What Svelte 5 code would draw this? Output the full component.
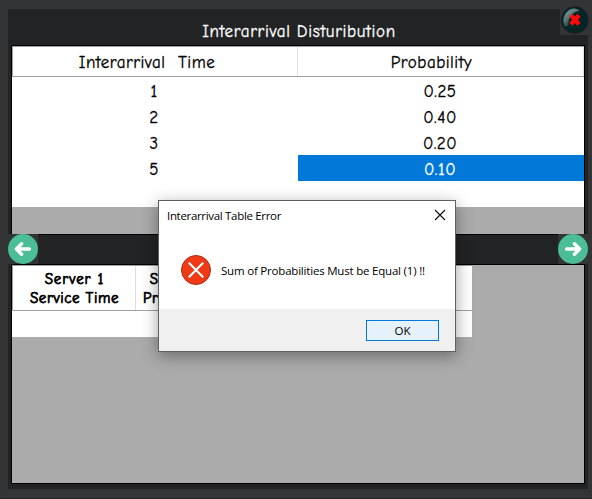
<script>
  const rows = [
    { time: '1', probability: '0.25' },
    { time: '2', probability: '0.40' },
    { time: '3', probability: '0.20' },
    { time: '5', probability: '0.10', selected: true },
    { time: '', probability: '' }
  ];
</script>

{#snippet arrow(right)}
  <svg class="arrow" viewBox="0 0 30 30" aria-hidden="true">
    <circle cx="15" cy="15" r="15" fill="#4bbd97" />
    <g transform={right ? 'translate(30 0) scale(-1 1)' : undefined}>
      <path d="M21.5 15H9M13.6 9.8 8.4 15l5.2 5.2" fill="none" stroke="#fff" stroke-width="3.4" stroke-linecap="round" stroke-linejoin="round" />
    </g>
  </svg>
{/snippet}

<div class="window">
  <main class="panel">
    <h1><span>Interarrival Disturibution</span></h1>
    <section class="grid first">
      <div class="row head">
        <div class="cell"><span>Interarrival&nbsp; Time</span></div>
        <div class="cell"><span>Probability</span></div>
      </div>
      {#each rows as row}
        <div class="row">
          <div class="cell"><span>{row.time}</span></div>
          <div class="cell" class:selected={row.selected}><span>{row.probability}</span></div>
        </div>
      {/each}
    </section>
    <nav>
      <button aria-label="Previous">{@render arrow(false)}</button>
      <button aria-label="Next">{@render arrow(true)}</button>
    </nav>
    <section class="grid second">
      <div class="servers">
        <div class="server-head">
          <div class="col"><span class="s1">Server 1</span><span>Service Time</span></div>
          <div class="col"><span class="s1">Server 1</span><span>Probability</span></div>
        </div>
      </div>
    </section>
  </main>

  <button class="close" aria-label="Close window">
    <svg viewBox="0 0 28 26" aria-hidden="true">
      <defs>
        <linearGradient id="shine" x1="0.1" y1="0" x2="0.8" y2="0.85">
          <stop offset="0" stop-color="#8fa3a3" />
          <stop offset="0.45" stop-color="#5b7776" />
          <stop offset="1" stop-color="#032526" />
        </linearGradient>
      </defs>
      <circle cx="14.8" cy="11.2" r="14" fill="#1d2527" />
      <circle cx="14.8" cy="11" r="12.9" fill="#032526" />
      <path d="M5 17.5C.8 10.5 5.2.6 13.6-.6c2.6 0 4.8.9 6.4 2.6C12.6 2 7.6 8.5 8.6 16.5Z" fill="url(#shine)" />
      <path d="m10.9 6.2 8.2 9m0-9-8.2 9" stroke="#ff0808" stroke-width="4.3" />
    </svg>
  </button>

  <div class="dialog" role="dialog" aria-label="Interarrival Table Error">
    <header>
      <span class="title">Interarrival Table Error</span>
      <svg width="12" height="12" viewBox="0 0 12 12" aria-hidden="true"><path d="m1 1 10 10M11 1 1 11" stroke="#111" stroke-width="1.15" /></svg>
    </header>
    <div class="body">
      <svg width="30" height="30" viewBox="0 0 30 30" aria-hidden="true">
        <circle cx="15" cy="15" r="14.5" fill="#f03a17" stroke="#a92c16" />
        <path d="m7.8 7.8 14.4 14.4m0-14.4L7.8 22.2" stroke="#fff" stroke-width="2.1" />
      </svg>
      <span class="message">Sum of Probabilities Must be Equal (1) !!</span>
    </div>
    <footer><button>OK</button></footer>
  </div>
</div>

<style>
  :global(body) { background: #333436; }
  .window, .window * { box-sizing: border-box; }
  .window {
    position: relative;
    width: 592px;
    height: 499px;
    padding: 9px 4px 0 8px;
    background: #333436;
    border-bottom: 1px solid #242426;
    overflow: hidden;
    font-family: "Comic Sans MS", "Comic Neue", "Open Sans", sans-serif;
    font-size: 17px;
    letter-spacing: 0.5px;
    color: #000;
  }
  button { margin: 0; padding: 0; border: 0; font: inherit; }
  span { white-space: nowrap; }
  svg { display: block; flex: none; }
  .panel { width: 580px; height: 480px; background: #222325; display: flex; flex-direction: column; -webkit-text-stroke: 0.3px currentColor; }
  h1 {
    margin: 0;
    height: 36px;
    padding: 8px 0 0 2px;
    font-size: 17px;
    font-weight: 400;
    letter-spacing: 0.63px;
    line-height: 29px;
    text-align: center;
    color: #fff;
  }
  .grid { width: 574px; margin-left: 3px; border: 1px solid #000; background: #ababab; }
  .first { height: 190px; }
  .row { display: grid; grid-template-columns: 286px 286px; grid-template-rows: 100%; height: 26px; background: #fff; line-height: 29px; text-align: center; }
  .cell { height: 100%; padding-right: 2px; }
  .head { height: 31px; border-top: 1px solid #a0a0a0; border-bottom: 1px solid #a0a0a0; line-height: 31px; box-shadow: inset 1px 0 #a0a0a0; }
  .head .cell { padding-right: 18px; border-right: 1px solid #e2e2e2; }
  .head .cell:first-child { padding-right: 15px; }
  .selected { background: #0078d7; color: #fff; }
  nav { display: flex; justify-content: space-between; height: 30px; margin-top: -1px; position: relative; }
  nav button { width: 30px; height: 30px; background: #333436; }
  .arrow { width: 30px; height: 30px; }
  .second { height: 220px; }
  .servers { width: 460px; height: 72px; background: #fff; }
  .server-head { display: flex; height: 46px; border-top: 1px solid #a0a0a0; border-bottom: 1px solid #a0a0a0; box-shadow: inset 1px 0 #a0a0a0; }
  .col { width: 124px; border-right: 1px solid #dedede; display: flex; flex-direction: column; align-items: center; padding: 4px 0 0 2px; font-size: 15px; letter-spacing: 0.55px; line-height: 19px; -webkit-text-stroke: 0.75px currentColor; }
  .col + .col { width: 86px; }
  .s1 { letter-spacing: 0.95px; }
  .close { position: absolute; left: 560px; top: 9px; width: 28px; height: 26px; background: #333436; }
  .close svg { width: 28px; height: 26px; overflow: visible; }
  .dialog {
    position: absolute;
    left: 158px;
    top: 200px;
    width: 298px;
    height: 152px;
    display: flex;
    flex-direction: column;
    border: 1px solid #606060;
    background: #fff;
    box-shadow: 0 4px 15px rgba(0, 0, 0, 0.38);
    font-family: "Segoe UI", "Open Sans", sans-serif;
    font-size: 11.5px;
    letter-spacing: 0;
  }
  header { display: flex; justify-content: space-between; height: 30px; padding: 8px 9px 0 8px; line-height: 14px; }
  .title { letter-spacing: -0.32px; }
  .body { display: flex; flex: 1; padding: 24px 0 0 22px; gap: 10px; }
  .message { line-height: 32px; letter-spacing: -0.2px; }
  footer { height: 42px; padding: 11px 16px 0 0; background: #f0f0f0; display: flex; justify-content: flex-end; }
  footer button { width: 73px; height: 21px; border: 1px solid #0078d7; background: #e5f1fb; line-height: 20px; }
</style>
